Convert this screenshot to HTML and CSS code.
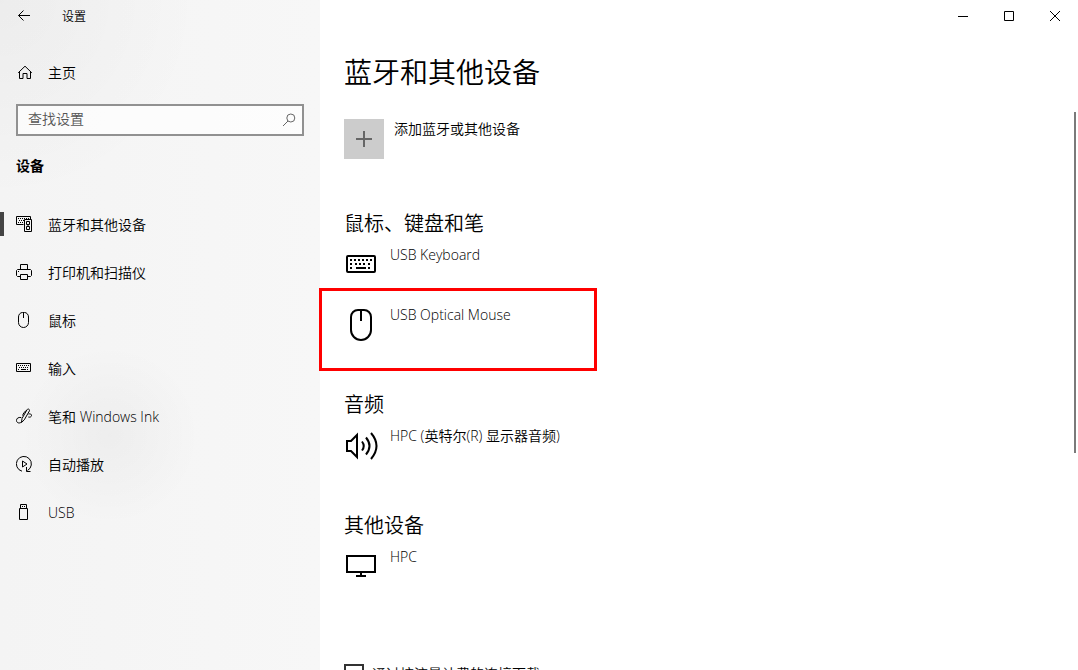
FILE: index.html
```
<!DOCTYPE html>
<html lang="zh-CN">
<head>
  <meta charset="utf-8">
  <meta name="viewport" content="width=device-width, initial-scale=1">
  <title>设置</title>
  <link rel="stylesheet" href="styles.css">
</head>
<body>
  <div class="window">
    <aside class="sidebar">
      <div class="titlebar">
        <button class="back" type="button" aria-label="返回">
          <svg width="14" height="14" viewBox="0 0 14 14"><path d="M13 6.500H1.500M6.500 1.500l-5 5 5 5"/></svg>
        </button>
        <span class="app-name">设置</span>
      </div>

      <a class="nav-link home" href="#">
        <svg width="16" height="16" viewBox="0 0 16 16"><path d="M2.200 8.800L9 2.200l6.800 6.600M3.500 7.800V14.500h3.500V9.500h4v5h3.500V7.800"/></svg>
        <span>主页</span>
      </a>

      <form class="search">
        <input type="text" placeholder="查找设置" aria-label="查找设置">
        <button type="submit" aria-label="搜索">
          <svg width="14" height="14" viewBox="0 0 14 14"><circle cx="8.800" cy="5" r="4"/><path d="M6 8L1 13"/></svg>
        </button>
      </form>

      <h2 class="group-name">设备</h2>

      <nav>
        <a class="nav-link active" href="#">
          <svg width="16" height="16" viewBox="0 0 16 16">
            <path d="M7.500 8.500H.5V.5h14V3"/>
            <path d="M2 2.500h11M3 4.500h5M2 6.500h5" stroke-dasharray="1 1"/>
            <path d="M8.500 3.500h7v12h-7zM10.500 5.500h3v3h-3zM10.500 10.500h3v3h-3zM12 8.500v2"/>
          </svg>
          <span>蓝牙和其他设备</span>
        </a>
        <a class="nav-link" href="#">
          <svg width="16" height="16" viewBox="0 0 16 16">
            <path d="M4.500 5.500v-5h7v5M4.500 12.500h-3l-1-1v-5l1-1h13l1 1v5l-1 1h-3M4.500 10.500h7v5h-7zM2 7.500h1"/>
          </svg>
          <span>打印机和扫描仪</span>
        </a>
        <a class="nav-link" href="#">
          <svg width="16" height="16" viewBox="0 0 16 16">
            <path d="M2.500 5a4 4.500 0 0 1 4-4.500h2a4 4.500 0 0 1 4 4.500v5.500a5 5 0 0 1-10 0zM7.500 1v5"/>
          </svg>
          <span>鼠标</span>
        </a>
        <a class="nav-link" href="#">
          <svg width="16" height="16" viewBox="0 0 16 16">
            <path d="M.5 3.500h14v8H.5z"/>
            <path d="M2 5.500h11M3 7.500h10M2 9.500h2M11 9.500h2" stroke-dasharray="1 1"/>
            <path d="M5 9.500h5"/>
          </svg>
          <span>输入</span>
        </a>
        <a class="nav-link" href="#">
          <svg width="16" height="16" viewBox="0 0 16 16">
            <path d="M5.500 14.500l.5-4 5-8.700c1-1.600 3.200-.4 2.300 1.300l-5 8.700zM10.800 2.200L8 4.500 6.500 7.500"/>
            <path d="M5.300 9.500C2 9 .5 10.500.5 12.500c0 2.500 3 3.300 5 1.500M12.500 6c2-.5 3 .3 3 1.500s-1.300 2-3.200 1.500"/>
          </svg>
          <span>笔和 Windows Ink</span>
        </a>
        <a class="nav-link" href="#">
          <svg width="16" height="16" viewBox="0 0 16 16">
            <path d="M6 15.200A7.500 7.500 0 1 1 11.500 14.500M10.500 11v4.500h4M6.500 5v6L11 8z"/>
          </svg>
          <span>自动播放</span>
        </a>
        <a class="nav-link" href="#">
          <svg width="16" height="16" viewBox="0 0 16 16">
            <path d="M4.500 4V.5h6V4M3.500 4.500h8v11h-8zM6 2.500h1M8 2.500h1"/>
          </svg>
          <span>USB</span>
        </a>
      </nav>
    </aside>

    <main class="main">
      <div class="caption-buttons">
        <button type="button" aria-label="最小化">
          <svg width="10" height="10" viewBox="0 0 10 10"><path d="M0 5.500h10"/></svg>
        </button>
        <button type="button" aria-label="最大化">
          <svg width="10" height="10" viewBox="0 0 10 10"><path d="M.5.5h9v9h-9z"/></svg>
        </button>
        <button type="button" aria-label="关闭">
          <svg width="10" height="10" viewBox="0 0 10 10"><path d="M0 0l10 10M10 0L0 10"/></svg>
        </button>
      </div>

      <div class="content">
        <h1>蓝牙和其他设备</h1>

        <button class="add-device" type="button">
          <span class="plus">
            <svg width="16" height="16" viewBox="0 0 16 16"><path d="M0 8h16M8 0v16"/></svg>
          </span>
          <span>添加蓝牙或其他设备</span>
        </button>

        <section class="devices">
          <h3>鼠标、键盘和笔</h3>
          <ul>
            <li>
              <button class="device" type="button">
                <svg width="36" height="40" viewBox="0 0 36 40">
                  <rect x="3" y="12" width="28" height="16" rx="1"/>
                  <path d="M6 16h22M6 20h3M11 20h12M24 20h4M6 24h4M24 24h4" stroke-dasharray="2 2"/>
                  <path d="M12 24h10"/>
                </svg>
                <span>USB Keyboard</span>
              </button>
            </li>
            <li class="highlight">
              <button class="device" type="button">
                <svg width="36" height="40" viewBox="0 0 36 40">
                  <path d="M7 13a7 7 0 0 1 7-7h6a7 7 0 0 1 7 7v13a10 10 0 0 1-20 0zM17 6v11"/>
                </svg>
                <span>USB Optical Mouse</span>
              </button>
            </li>
          </ul>
        </section>

        <section class="devices">
          <h3>音频</h3>
          <ul>
            <li>
              <button class="device" type="button">
                <svg width="36" height="40" viewBox="0 0 36 40">
                  <path d="M3 16v10h4l6 6V10l-6 6zM18 16.500q3.500 4.500 0 9M22 12.500q7 8.500 0 17M27 8q11 13 0 26"/>
                </svg>
                <span>HPC (英特尔(R) 显示器音频)</span>
              </button>
            </li>
          </ul>
        </section>

        <section class="devices">
          <h3>其他设备</h3>
          <ul>
            <li>
              <button class="device" type="button">
                <svg width="36" height="40" viewBox="0 0 36 40">
                  <path d="M3 10h28v16H3zM17 26v4M12 30h10"/>
                </svg>
                <span>HPC</span>
              </button>
            </li>
          </ul>
        </section>

        <label class="metered">
          <input type="checkbox">
          <span>通过按流量计费的连接下载</span>
        </label>
      </div>
      <div class="scroll-thumb"></div>
    </main>
  </div>
</body>
</html>
```
FILE: styles.css
```
*, *::after {
  box-sizing: border-box;
}

body {
  margin: 0;
  background-color: #fff;
  color: #000;
  font-family: "Open Sans", "Noto Sans CJK SC", sans-serif;
  font-size: 14px;
  font-weight: 350;
  line-height: 20px;
}

h1, h2, h3, ul {
  margin: 0;
  padding: 0;
  font-weight: inherit;
}

ul {
  list-style: none;
}

button {
  padding: 0;
  border: none;
  background: none;
  color: inherit;
  font: inherit;
  text-align: left;
}

svg {
  display: block;
  flex-shrink: 0;
  fill: none;
  stroke: #000;
}

.window {
  display: grid;
  grid-template-columns: 320px 1fr;
  height: 100vh;
  overflow: hidden;
}

/* sidebar */
.sidebar {
  background:
    radial-gradient(circle at 110px 435px, rgba(0, 0, 0, 0.03), transparent 90px),
    radial-gradient(circle at 0 0, rgba(0, 0, 0, 0.03), transparent 200px),
    linear-gradient(to right, #f4f4f4, #f7f7f7);
}

.titlebar {
  display: flex;
  align-items: center;
  height: 32px;
}

.back {
  display: flex;
  align-items: center;
  justify-content: center;
  width: 48px;
  height: 32px;
}

.app-name {
  margin-left: 14px;
  padding-top: 2px;
  font-size: 12px;
}

.nav-link {
  display: flex;
  align-items: center;
  gap: 16px;
  height: 48px;
  padding: 0 16px;
  color: #000;
  text-decoration: none;
}

.nav-link span {
  padding-top: 2px;
}

.nav-link:hover {
  background-color: rgba(0, 0, 0, 0.05);
}

.home {
  margin-top: 16px;
}

.active {
  background: linear-gradient(#444, #444) left center / 4px 24px no-repeat;
}

.search {
  display: flex;
  margin: 8px 16px 0;
  height: 32px;
  border: 2px solid #919191;
  background-color: rgba(255, 255, 255, 0.7);
}

.search input {
  flex: 1;
  min-width: 0;
  padding: 0 10px 2px;
  border: none;
  outline: none;
  background: none;
  font: inherit;
}

.search input::placeholder {
  color: #555;
}

.search button {
  padding: 0 6px;
}

.search svg {
  stroke: #666;
}

.group-name {
  margin: 20px 16px 24px;
  font-size: 14px;
  font-weight: bold;
}

/* main area */
.main {
  position: relative;
  min-width: 0;
}

.caption-buttons {
  display: flex;
  justify-content: flex-end;
}

.caption-buttons button {
  display: flex;
  align-items: center;
  justify-content: center;
  width: 46px;
  height: 32px;
}

.content {
  padding: 20px 24px;
}

h1 {
  font-size: 28px;
  line-height: 40px;
}

.add-device {
  display: flex;
  gap: 10px;
  margin: 27px 0 50px;
}

.plus {
  display: flex;
  align-items: center;
  justify-content: center;
  width: 40px;
  height: 40px;
  background-color: #ccc;
}

.plus svg {
  stroke: #666;
  stroke-width: 2;
}

.devices {
  margin-bottom: 46px;
}

.devices h3 {
  margin-bottom: 5px;
  font-size: 20px;
  line-height: 30px;
}

.devices ul {
  display: grid;
  gap: 20px;
}

.device {
  display: flex;
  gap: 10px;
  line-height: 22px;
}

.device svg {
  stroke-width: 2;
}

.highlight {
  position: relative;
}

/* red frame drawn over the device row */
.highlight::after {
  content: "";
  position: absolute;
  top: -16px;
  left: -25px;
  width: 278px;
  height: 83px;
  border: 3px solid #f00;
  pointer-events: none;
}

.metered {
  display: flex;
  gap: 8px;
  margin-top: 78px;
}

.metered input {
  appearance: none;
  width: 20px;
  height: 20px;
  margin: 0;
  border: 2px solid #333;
}

.scroll-thumb {
  position: absolute;
  top: 112px;
  right: 2px;
  width: 2px;
  height: 341px;
  background-color: #7a7a7a;
}
```
